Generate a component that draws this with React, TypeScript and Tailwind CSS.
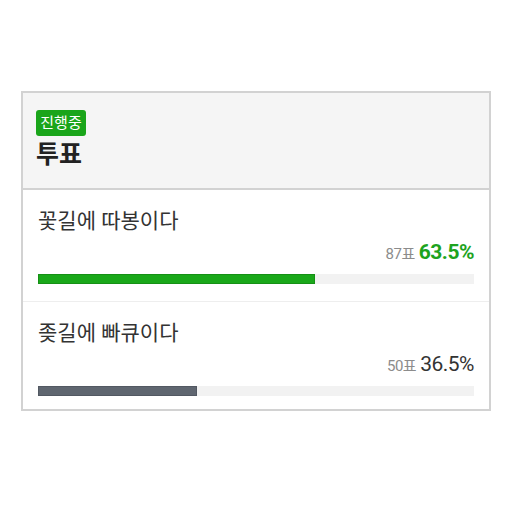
const options = [
  { label: '꽃길에 따봉이다', votes: 87, percent: 63.5, leading: true },
  { label: '좆길에 빠큐이다', votes: 50, percent: 36.5, leading: false },
];

const VoteOption = ({ label, votes, percent, leading }: (typeof options)[number]) => (
  <div className="px-[15px] pt-[17px] pb-[17px] border-b border-[#eeeeee] last:border-b-0">
    <div className="text-[21px] leading-[28px] text-[#333333]">{label}</div>
    <div className="mt-[5px] flex items-baseline justify-end gap-[4px] leading-[24px]">
      <span className="text-[15px] text-[#8c8c8c] tracking-[-0.5px]">{votes}표</span>
      <span
        className={
          leading
            ? 'text-[21px] font-bold text-[#1ea31e] tracking-[-0.5px]'
            : 'text-[21px] text-[#333333] tracking-[-0.5px]'
        }
      >
        {percent}%
      </span>
    </div>
    <div className="mt-[8px] h-[10px] bg-[#f2f2f2]">
      <div
        className={leading ? 'h-full bg-[#1aa81a] border border-[#169016]' : 'h-full bg-[#5f6670] border border-[#525862]'}
        style={{ width: `${percent}%` }}
      />
    </div>
  </div>
);

export default function App() {
  return (
    <div
      className="w-[510px] h-[510px] bg-white pt-[91px] pl-[21px]"
      style={{ fontFamily: 'Roboto, "Noto Sans CJK KR", sans-serif' }}
    >
      <div className="w-[470px] h-[320px] border-2 border-[#d2d2d2] bg-white">
        <div className="bg-[#f5f5f5] border-b-2 border-[#d2d2d2] px-[13px] pt-[17px] h-[97px]">
          <div className="w-[50px] h-[26px] rounded-[3px] bg-[#1aa51a] text-white text-[15px] leading-[26px] text-center">
            진행중
          </div>
          <div className="mt-[3px] text-[25px] leading-[32px] font-bold text-[#222222]">투표</div>
        </div>
        {options.map((o) => (
          <VoteOption key={o.label} {...o} />
        ))}
      </div>
    </div>
  );
}
